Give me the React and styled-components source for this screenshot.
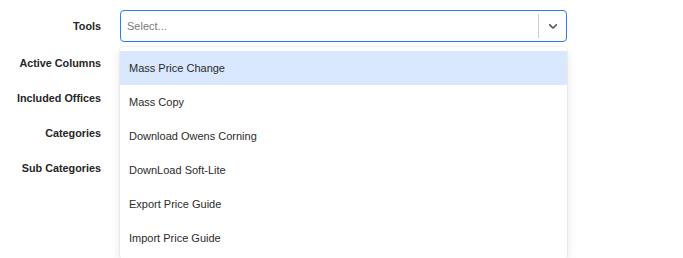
import React from "react";
import styled, { createGlobalStyle } from "styled-components";

const Global = createGlobalStyle`
  html, body { margin: 0; padding: 0; background: #fff; }
  body { font-family: "Liberation Sans", Arial, Helvetica, sans-serif; }
`;

const Page = styled.div`
  min-height: 258px;
  overflow: hidden;
`;

const Form = styled.div`
  display: grid;
  grid-template-columns: 101px 447px;
  grid-template-rows: repeat(5, 35px);
  column-gap: 19px;
  padding-top: 10px;
`;

const Label = styled.div`
  display: flex;
  align-items: center;
  justify-content: flex-end;
  font-size: 10.8px;
  font-weight: 700;
  color: #262626;
  white-space: nowrap;
  padding-bottom: ${(p) => (p.$first ? "3px" : "0")};
`;

const Field = styled.div`
  position: relative;
  align-self: start;
`;

const Control = styled.div`
  box-sizing: border-box;
  height: 32px;
  display: flex;
  align-items: center;
  border: 1px solid #2a7cf6;
  border-radius: 4px;
  background: #fff;
`;

const ValueArea = styled.div`
  flex: 1;
  padding-left: 6px;
  font-size: 11px;
  color: #7a7a7a;
`;

const Indicators = styled.div`
  display: flex;
  align-items: center;
  align-self: stretch;
`;

const Separator = styled.span`
  align-self: stretch;
  width: 1px;
  margin: 3px 0;
  background: #cccccc;
`;

const Chevron = styled.div`
  width: 27px;
  display: flex;
  align-items: center;
  justify-content: center;
  color: #555;
`;

const Menu = styled.div`
  position: absolute;
  top: calc(100% + 5px);
  left: 0;
  right: 0;
  z-index: 10;
  background: #fff;
  border-radius: 4px;
  box-shadow: 0 0 0 1px rgba(0, 0, 0, 0.04), 0 4px 11px rgba(0, 0, 0, 0.1);
  padding: 4px 0;
`;

const Option = styled.div`
  height: 34px;
  display: flex;
  align-items: center;
  padding: 0 9px;
  font-size: 11px;
  color: #2b2b2b;
  background: ${(p) => (p.$focused ? "#d9e7ff" : "transparent")};
`;

const options = [
  "Mass Price Change",
  "Mass Copy",
  "Download Owens Corning",
  "DownLoad Soft-Lite",
  "Export Price Guide",
  "Import Price Guide",
];

const ChevronDown = () => (
  <svg width="14" height="14" viewBox="0 0 20 20" aria-hidden="true">
    <path
      fill="currentColor"
      d="M4.516 7.548c0.436-0.446 1.043-0.481 1.576 0l3.908 3.747 3.908-3.747c0.533-0.481 1.141-0.446 1.574 0 0.436 0.445 0.408 1.197 0 1.615-0.406 0.418-4.695 4.502-4.695 4.502-0.217 0.223-0.502 0.335-0.787 0.335s-0.57-0.112-0.789-0.335c0 0-4.287-4.084-4.695-4.502s-0.436-1.170 0-1.615z"
    />
  </svg>
);

export default function App() {
  return (
    <Page>
      <Global />
      <Form>
        <Label $first>Tools</Label>
        <Field>
          <Control>
            <ValueArea>Select...</ValueArea>
            <Indicators>
              <Separator />
              <Chevron>
                <ChevronDown />
              </Chevron>
            </Indicators>
          </Control>
          <Menu>
            {options.map((o, i) => (
              <Option key={o} $focused={i === 0}>
                {o}
              </Option>
            ))}
          </Menu>
        </Field>
        <Label>Active Columns</Label>
        <Field />
        <Label>Included Offices</Label>
        <Field />
        <Label>Categories</Label>
        <Field />
        <Label>Sub Categories</Label>
        <Field />
      </Form>
    </Page>
  );
}
